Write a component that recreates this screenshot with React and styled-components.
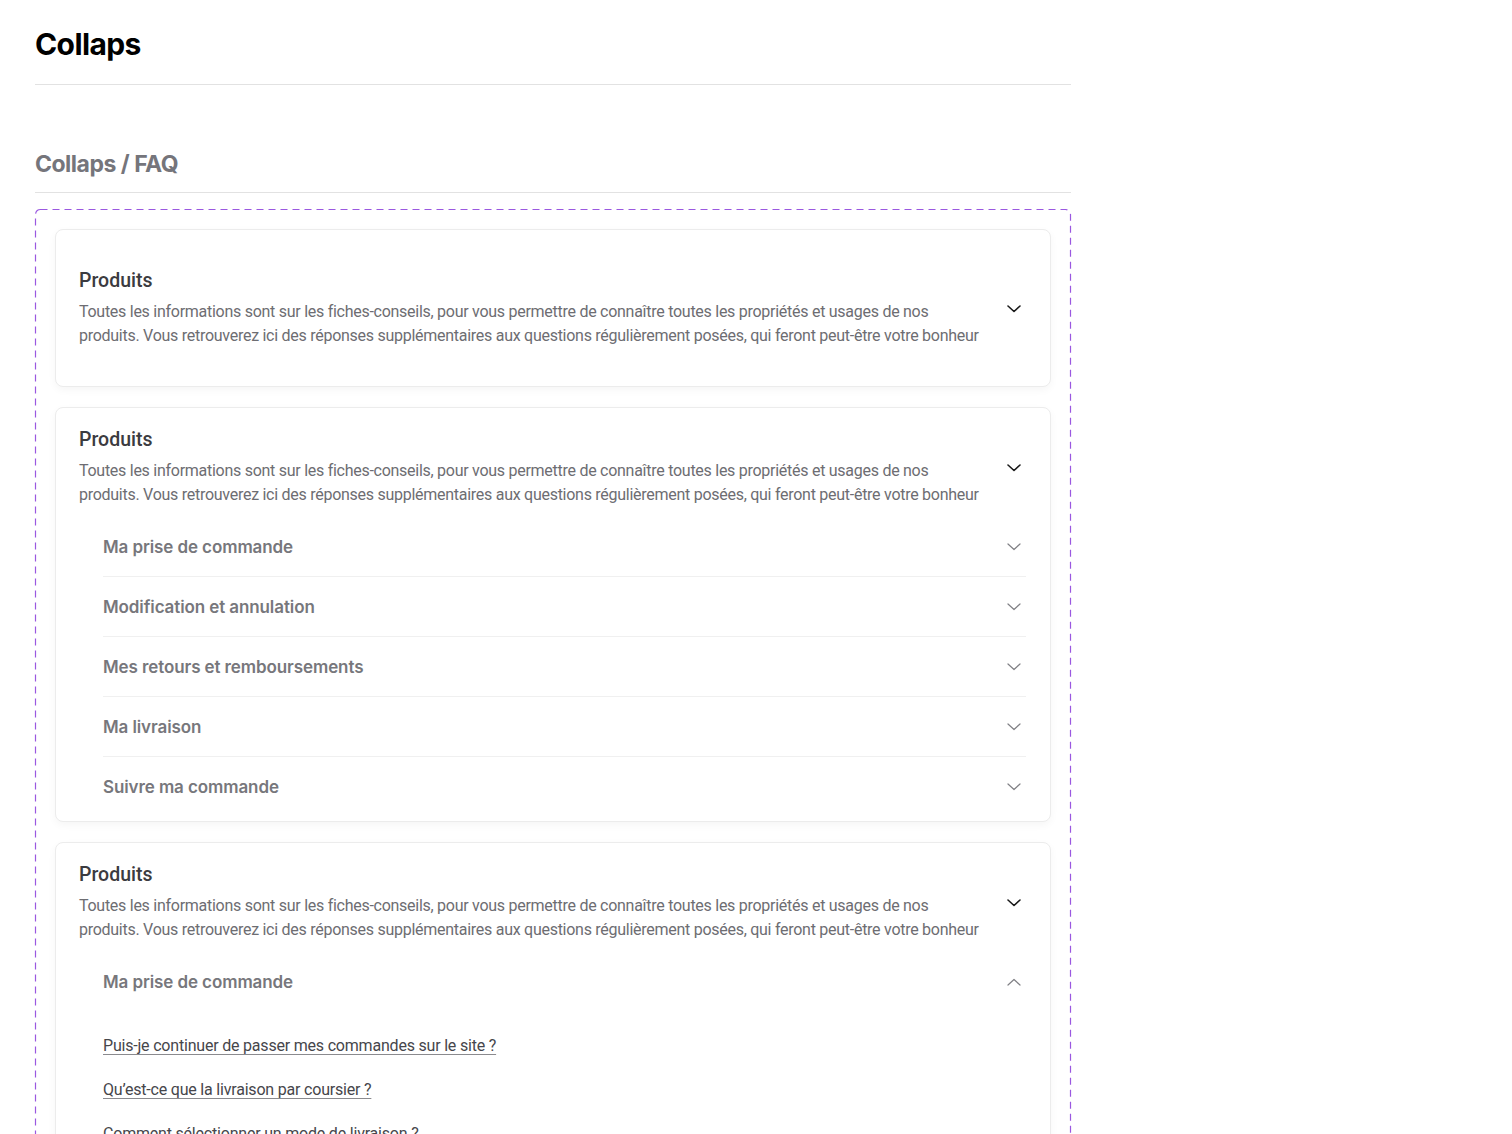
import React from 'react';
import styled, { createGlobalStyle } from 'styled-components';

const GlobalStyle = createGlobalStyle`
  * { box-sizing: border-box; }
  body {
    margin: 0;
    background: #fff;
    font-family: Roboto, "Liberation Sans", sans-serif;
  }
`;

const Page = styled.div`
  width: 1071px;
  padding: 24px 0 40px 35px;
`;

const PageTitle = styled.h1`
  margin: 0;
  font-family: Inter, "Liberation Sans", sans-serif;
  font-size: 30px;
  font-weight: 700;
  letter-spacing: -0.6px;
  line-height: 40px;
  color: #000;
  padding-bottom: 20px;
  border-bottom: 1px solid #e2e2e2;
`;

const SectionTitle = styled.h2`
  margin: 63px 0 0;
  font-family: Inter, "Liberation Sans", sans-serif;
  font-size: 23px;
  font-weight: 700;
  letter-spacing: -0.5px;
  line-height: 32px;
  color: #75757b;
  padding-bottom: 12px;
  border-bottom: 1px solid #e2e2e2;
`;

const Frame = styled.div`
  position: relative;
  margin-top: 16px;
  padding: 20px;
  display: flex;
  flex-direction: column;
  gap: 20px;
`;

// dashed component outline drawn over the frame
const FrameOutline = styled.svg`
  position: absolute;
  inset: 0;
  width: 100%;
  height: 100%;
  pointer-events: none;
  overflow: visible;
`;

const Card = styled.div`
  background: #fff;
  border: 1px solid #ececec;
  border-radius: 8px;
  box-shadow: 0 3px 8px rgba(0, 0, 0, 0.04);
  padding: ${(p) => (p.$roomy ? '39px 24px 38px 23px' : '20px 24px 4px 23px')};
`;

const Header = styled.div`
  display: flex;
  align-items: center;
  gap: 16px;
`;

const HeaderText = styled.div`
  flex: 1;
`;

const CardTitle = styled.div`
  font-size: 19.5px;
  font-weight: 500;
  line-height: 24px;
  color: #3b3b40;
  margin-bottom: 7px;
`;

const CardDesc = styled.p`
  margin: 0;
  font-size: 16px;
  letter-spacing: -0.27px;
  line-height: 24px;
  color: #6d6d72;
`;

const IconBox = styled.span`
  width: 24px;
  height: 24px;
  display: flex;
  align-items: center;
  justify-content: center;
  color: ${(p) => p.$color || '#1a1a1a'};
  flex-shrink: 0;
`;

const SubList = styled.div`
  margin: 10px 0 0 24px;
`;

const SubRow = styled.div`
  height: 60px;
  display: flex;
  align-items: center;
  justify-content: space-between;
  border-bottom: 1px solid ${(p) => (p.$last ? 'transparent' : '#f0f0f0')};
`;

const SubTitle = styled.span`
  font-family: Inter, "Liberation Sans", sans-serif;
  font-size: 17px;
  font-weight: 600;
  letter-spacing: -0.1px;
  color: #77777c;
`;

const Panel = styled.div`
  display: flex;
  flex-direction: column;
  gap: 20px;
  padding: 22px 0 20px;
`;

const Link = styled.a`
  font-size: 16px;
  letter-spacing: -0.2px;
  line-height: 24px;
  color: #46464b;
  text-decoration: underline;
  text-underline-offset: 3px;
  text-decoration-color: #8a8a8e;
  cursor: pointer;
`;

const Chevron = ({ up, width = 1.6 }) => (
  <svg width="14" height="8" viewBox="0 0 14 8" fill="none">
    <path
      d={up ? 'M1 7L7 1.5L13 7' : 'M1 1L7 6.5L13 1'}
      stroke="currentColor"
      strokeWidth={width}
      strokeLinecap="round"
      strokeLinejoin="round"
    />
  </svg>
);

const desc =
  'Toutes les informations sont sur les fiches-conseils, pour vous permettre de connaître toutes les propriétés et usages de nos produits. Vous retrouverez ici des réponses supplémentaires aux questions régulièrement posées, qui feront peut-être votre bonheur';

const topics = [
  'Ma prise de commande',
  'Modification et annulation',
  'Mes retours et remboursements',
  'Ma livraison',
  'Suivre ma commande',
];

const questions = [
  'Puis-je continuer de passer mes commandes sur le site ?',
  'Qu’est-ce que la livraison par coursier ?',
  'Comment sélectionner un mode de livraison ?',
  'Quels sont les délais de livraison ?',
];

const CardHeader = () => (
  <Header>
    <HeaderText>
      <CardTitle>Produits</CardTitle>
      <CardDesc>{desc}</CardDesc>
    </HeaderText>
    <IconBox>
      <Chevron />
    </IconBox>
  </Header>
);

const App = () => (
  <>
    <GlobalStyle />
    <Page>
      <PageTitle>Collaps</PageTitle>
      <SectionTitle>Collaps / FAQ</SectionTitle>
      <Frame>
        <FrameOutline>
          <rect
            x="0.5"
            y="0.5"
            width="calc(100% - 1px)"
            height="calc(100% - 1px)"
            rx="5"
            fill="none"
            stroke="#9a58e0"
            strokeWidth="1.2"
            strokeDasharray="7 5"
          />
        </FrameOutline>
        <Card $roomy>
          <CardHeader />
        </Card>

        <Card>
          <CardHeader />
          <SubList>
            {topics.map((t, i) => (
              <SubRow key={t} $last={i === topics.length - 1}>
                <SubTitle>{t}</SubTitle>
                <IconBox $color="#808085">
                  <Chevron width={1.2} />
                </IconBox>
              </SubRow>
            ))}
          </SubList>
        </Card>

        <Card>
          <CardHeader />
          <SubList>
            <SubRow $last>
              <SubTitle>{topics[0]}</SubTitle>
              <IconBox $color="#808085">
                <Chevron up width={1.2} />
              </IconBox>
            </SubRow>
            <Panel>
              {questions.map((q) => (
                <Link key={q}>{q}</Link>
              ))}
            </Panel>
            {topics.slice(1).map((t, i) => (
              <SubRow key={t} $last={i === topics.length - 2}>
                <SubTitle>{t}</SubTitle>
                <IconBox $color="#808085">
                  <Chevron width={1.2} />
                </IconBox>
              </SubRow>
            ))}
          </SubList>
        </Card>
      </Frame>
    </Page>
  </>
);

export default App;
